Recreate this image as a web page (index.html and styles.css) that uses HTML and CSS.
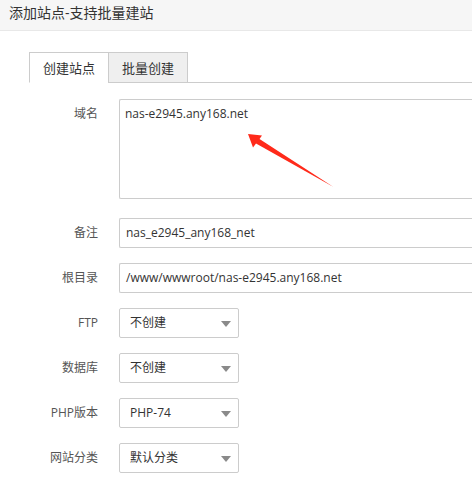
FILE: index.html
```html
<!DOCTYPE html>
<html lang="zh-CN">
<head>
<meta charset="utf-8">
<title>添加站点</title>
<link rel="stylesheet" href="styles.css">
</head>
<body>
<div class="header">添加站点-支持批量建站</div>
<div class="content">
  <div class="tabs">
    <div class="tab active">创建站点</div>
    <div class="tab">批量创建</div>
    <div class="tab-fill"></div>
  </div>
  <div class="form">
    <div class="row row-area">
      <div class="label">域名</div>
      <div class="field textarea">nas-e2945.any168.net</div>
      <svg class="arrow" width="100" height="60" viewBox="240 130 100 60">
        <polygon points="248,134 262,135.5 259.5,139 333.5,187 256,143.5 253,147.5" fill="#ff2a1a"/>
      </svg>
    </div>
    <div class="row">
      <div class="label">备注</div>
      <div class="field input">nas_e2945_any168_net</div>
    </div>
    <div class="row">
      <div class="label">根目录</div>
      <div class="field input">/www/wwwroot/nas-e2945.any168.net</div>
    </div>
    <div class="row">
      <div class="label">FTP</div>
      <div class="field select">不创建<span class="caret"></span></div>
    </div>
    <div class="row">
      <div class="label">数据库</div>
      <div class="field select">不创建<span class="caret"></span></div>
    </div>
    <div class="row">
      <div class="label">PHP版本</div>
      <div class="field select">PHP-74<span class="caret"></span></div>
    </div>
    <div class="row">
      <div class="label">网站分类</div>
      <div class="field select">默认分类<span class="caret"></span></div>
    </div>
  </div>
</div>
</body>
</html>
```

FILE: styles.css
```css
html, body {
  margin: 0;
  padding: 0;
  background: #fff;
  overflow: hidden;
}
body {
  font-family: "Open Sans", "Noto Sans CJK SC", sans-serif;
  font-size: 12px;
  color: #333;
  width: 472px;
  height: 504px;
}
.header {
  height: 31px;
  box-sizing: border-box;
  border-bottom: 1px solid #e8e8e8;
  background: #f6f6f6;
  font-size: 14px;
  line-height: 25px;
  padding-left: 9px;
  color: #333;
}
.content {
  padding-top: 21px;
}
.tabs {
  display: flex;
  padding-left: 29px;
  height: 31px;
}
.tab {
  box-sizing: border-box;
  width: 80px;
  height: 31px;
  border: 1px solid #ccc;
  background: #efefef;
  text-align: center;
  line-height: 30px;
  font-size: 13px;
  color: #333;
}
.tab + .tab {
  margin-left: -1px;
}
.tab.active {
  background: #fff;
  border-bottom-color: #fff;
}
.tab-fill {
  flex: 1;
  border-bottom: 1px solid #ccc;
}
.form {
  padding-top: 16px;
}
.row {
  display: flex;
  align-items: flex-start;
  margin-bottom: 15px;
  position: relative;
}
.row-area {
  margin-bottom: 19px;
}
.label {
  width: 98px;
  padding-right: 21px;
  text-align: right;
  line-height: 30px;
  color: #555;
  flex: none;
}
.field {
  box-sizing: border-box;
  border: 1px solid #ccc;
  border-radius: 2px;
  height: 30px;
  line-height: 28px;
  color: #333;
  flex: none;
  white-space: nowrap;
}
.textarea {
  width: 353px;
  height: 100px;
  padding: 2px 5px;
  line-height: 24px;
  border-right: none;
  border-radius: 2px 0 0 2px;
}
.input {
  width: 353px;
  padding: 0 6px;
  border-right: none;
  border-radius: 2px 0 0 2px;
}
.select {
  width: 120px;
  padding: 0 10px;
  position: relative;
}
.caret {
  position: absolute;
  right: 7px;
  top: 12px;
  width: 0;
  height: 0;
  border-left: 5px solid transparent;
  border-right: 5px solid transparent;
  border-top: 6px solid #8a8a8a;
}
.arrow {
  position: absolute;
  left: 240px;
  top: 31px;
}
```
